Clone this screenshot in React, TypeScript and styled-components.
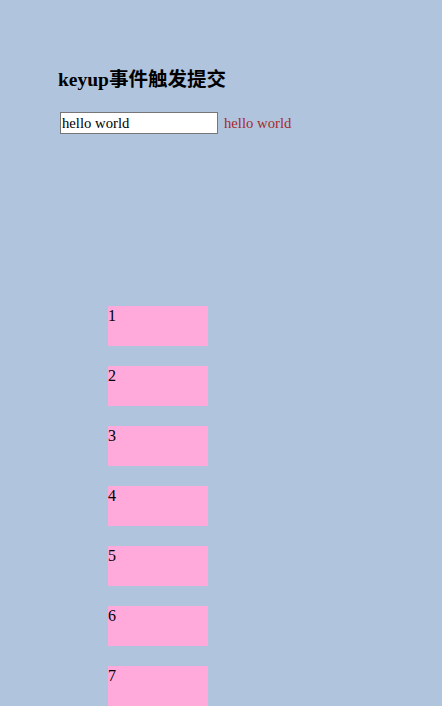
import React, { useState } from "react";
import styled, { createGlobalStyle } from "styled-components";

const GlobalStyle = createGlobalStyle`
  html, body {
    margin: 0;
    padding: 0;
    background: #b0c4de;
  }
  body {
    font-family: "Liberation Serif", "Noto Sans CJK SC", serif;
    font-size: 16px;
    color: #000;
  }
`;

const Page = styled.div`
  padding: 66px 0 0 58px;
`;

const Title = styled.h3`
  margin: 0 0 18px;
  font-size: 19.5px;
  font-weight: bold;
  line-height: 28px;
`;

const Row = styled.div`
  display: flex;
  align-items: center;
  gap: 6px;
  padding-left: 2px;
`;

const TextInput = styled.input`
  box-sizing: border-box;
  width: 158px;
  height: 22px;
  padding: 0 1px;
  border: 1px solid #767676;
  background: #fff;
  font-family: "Liberation Serif", "Times New Roman", serif;
  font-size: 14.7px;
  color: #000;
  outline: none;
`;

const Echo = styled.span`
  color: #a52a2a;
  font-size: 14.7px;
`;

const List = styled.div`
  display: flex;
  flex-direction: column;
  gap: 20px;
  margin: 172px 0 0 50px;
`;

const Item = styled.div`
  width: 100px;
  height: 40px;
  background: #ffaadb;
  font-size: 16px;
  line-height: 20px;
`;

export default function App() {
  const [value, setValue] = useState("hello world");
  const items = [1, 2, 3, 4, 5, 6, 7];
  return (
    <>
      <GlobalStyle />
      <Page>
        <Title>keyup事件触发提交</Title>
        <Row>
          <TextInput value={value} onChange={(e) => setValue(e.target.value)} />
          <Echo>{value}</Echo>
        </Row>
        <List>
          {items.map((n) => (
            <Item key={n}>{n}</Item>
          ))}
        </List>
      </Page>
    </>
  );
}
